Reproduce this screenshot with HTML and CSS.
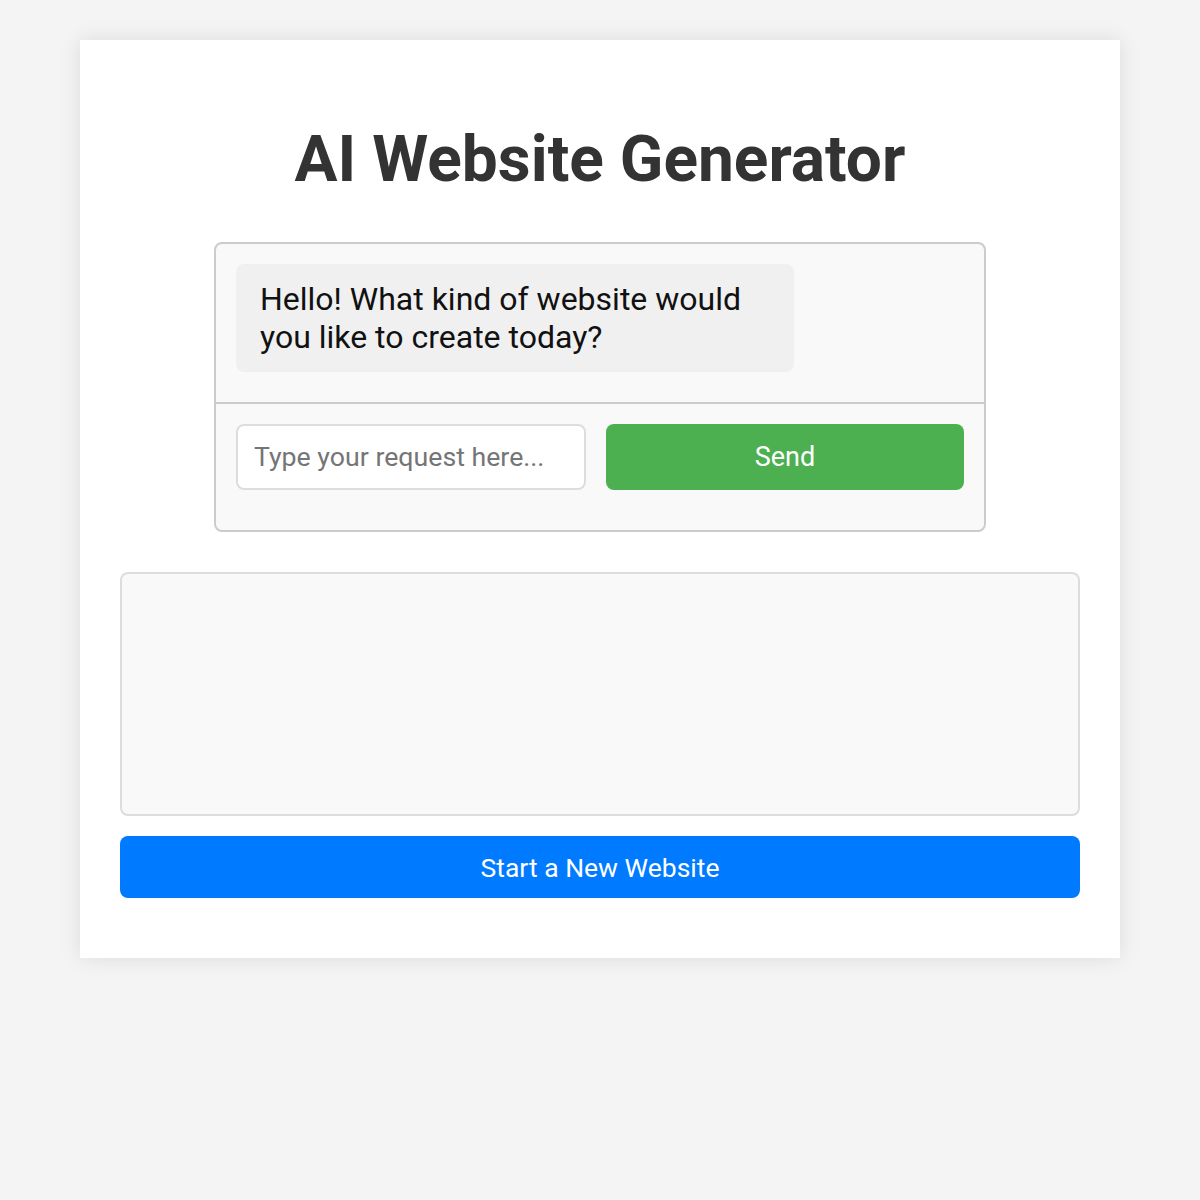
FILE: index.html
```html
<!DOCTYPE html>
<html lang="en">
<head>
    <meta charset="UTF-8">
    <meta name="viewport" content="width=device-width, initial-scale=1.0">
    <title>AI Website Generator</title>
    <link rel="stylesheet" href="styles.css">
</head>
<body>
    <div class="container">
        <h1>AI Website Generator</h1>

        <div class="chat-box">
            <div class="chat-messages">
                <div class="message bot">Hello! What kind of website would you like to create today?</div>
            </div>
            <div class="chat-input">
                <input type="text" placeholder="Type your request here...">
                <button class="send-btn">Send</button>
            </div>
        </div>

        <div class="preview"></div>

        <button class="new-btn">Start a New Website</button>
    </div>
</body>
</html>
```

FILE: styles.css
```css
* {
    margin: 0;
    padding: 0;
    box-sizing: border-box;
    font-family: Roboto, 'Liberation Sans', sans-serif;
}

body {
    background: #f4f4f4;
    min-height: 100vh;
}

.container {
    width: 1040px;
    margin: 40px auto;
    padding: 40px 40px 60px;
    background: #fff;
    box-shadow: 0 0 20px rgba(0,0,0,0.1);
}

h1 {
    font-size: 64px;
    line-height: 76px;
    font-weight: 700;
    color: #333;
    text-align: center;
    margin: 42px 0 44px;
}

.chat-box {
    width: 772px;
    margin: 0 auto;
    background: #f9f9f9;
    border: 2px solid #ccc;
    border-radius: 8px;
}

.chat-messages {
    padding: 20px 20px 30px;
    border-bottom: 2px solid #ccc;
}

.message {
    width: 558px;
    padding: 16px 24px;
    background: #f0f0f0;
    border-radius: 8px;
    font-size: 32px;
    line-height: 38px;
    color: #111;
}

.chat-input {
    display: flex;
    gap: 20px;
    padding: 20px 20px 40px;
}

.chat-input input {
    flex: 0 0 350px;
    min-width: 0;
    width: 350px;
    height: 66px;
    padding: 0 16px;
    border: 2px solid #ddd;
    border-radius: 8px;
    background: #fff;
    font-size: 26.7px;
    color: #333;
    outline: none;
}

.chat-input input::placeholder {
    color: #757575;
}

.send-btn {
    flex: 1;
    height: 66px;
    border: none;
    border-radius: 8px;
    background: #4caf50;
    color: #fff;
    font-size: 27px;
}

.preview {
    height: 244px;
    margin-top: 40px;
    background: #f9f9f9;
    border: 2px solid #ddd;
    border-radius: 8px;
}

.new-btn {
    display: block;
    width: 100%;
    height: 62px;
    margin-top: 20px;
    border: none;
    border-radius: 8px;
    background: #007bff;
    color: #fff;
    font-size: 26.5px;
}
```
